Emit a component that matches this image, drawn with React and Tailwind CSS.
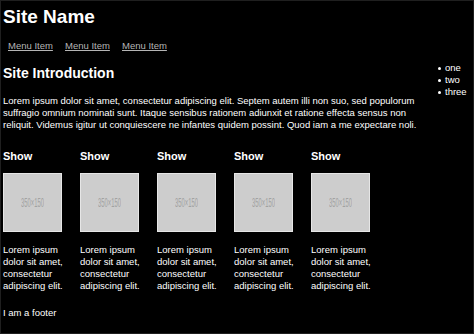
export default function App() {
  const cards = [1, 2, 3, 4, 5]

  return (
    <div className="h-[334px] w-[474px] overflow-hidden bg-black text-white border border-[#1f1f1f] font-['Liberation_Sans',Arial,sans-serif] flex">

      {/* Main column */}
      <div className="w-[428px] pl-[2px] shrink-0">

        <h1 className="mt-[6px] text-[19px] leading-[20px] font-bold">Site Name</h1>

        <nav className="mt-[13px] pl-[5px] flex text-[9.5px] leading-[12px]">
          <a href="#" className="w-[57px] underline text-[#b5b5b5]">Menu Item</a>
          <a href="#" className="w-[57px] underline text-[#b5b5b5]">Menu Item</a>
          <a href="#" className="w-[57px] underline text-[#b5b5b5]">Menu Item</a>
        </nav>

        <h2 className="mt-[13px] text-[14px] leading-[16px] font-bold">Site Introduction</h2>

        <p className="mt-[14px] text-[9.5px] leading-[12px]">
          Lorem ipsum dolor sit amet, consectetur adipiscing elit. Septem autem illi non suo, sed populorum
          suffragio omnium nominati sunt. Itaque sensibus rationem adiunxit et ratione effecta sensus non
          reliquit. Videmus igitur ut conquiescere ne infantes quidem possint. Quod iam a me expectare noli.
        </p>

        {/* Cards */}
        <div className="mt-[18px] flex gap-[15px]">
          {cards.map((c) => (
            <div key={c} className="w-[62px]">
              <h3 className="text-[11px] leading-[14px] font-bold">Show</h3>
              <div className="mt-[10px] w-[59px] h-[59px] bg-[#cdcdcd] border border-[#e6e6e6] flex items-center justify-center">
                <span className="inline-block scale-x-[0.45] text-[13px] leading-none text-[#a2a2a2]">350×150</span>
              </div>
              <p className="mt-[12px] text-[9.5px] leading-[12px]">
                Lorem ipsum dolor sit amet, consectetur adipiscing elit.
              </p>
            </div>
          ))}
        </div>

        <footer className="mt-[15px] text-[9.5px] leading-[12px]">I am a footer</footer>

      </div>

      {/* Sidebar */}
      <aside className="flex-1 pl-[9px]">
        <ul className="mt-[61px] text-[9.5px] leading-[12px]">
          {['one', 'two', 'three'].map((t) => (
            <li key={t} className="flex items-center gap-[4px]">
              <span className="w-[3px] h-[3px] rounded-full bg-white" />
              {t}
            </li>
          ))}
        </ul>
      </aside>

    </div>
  )
}
